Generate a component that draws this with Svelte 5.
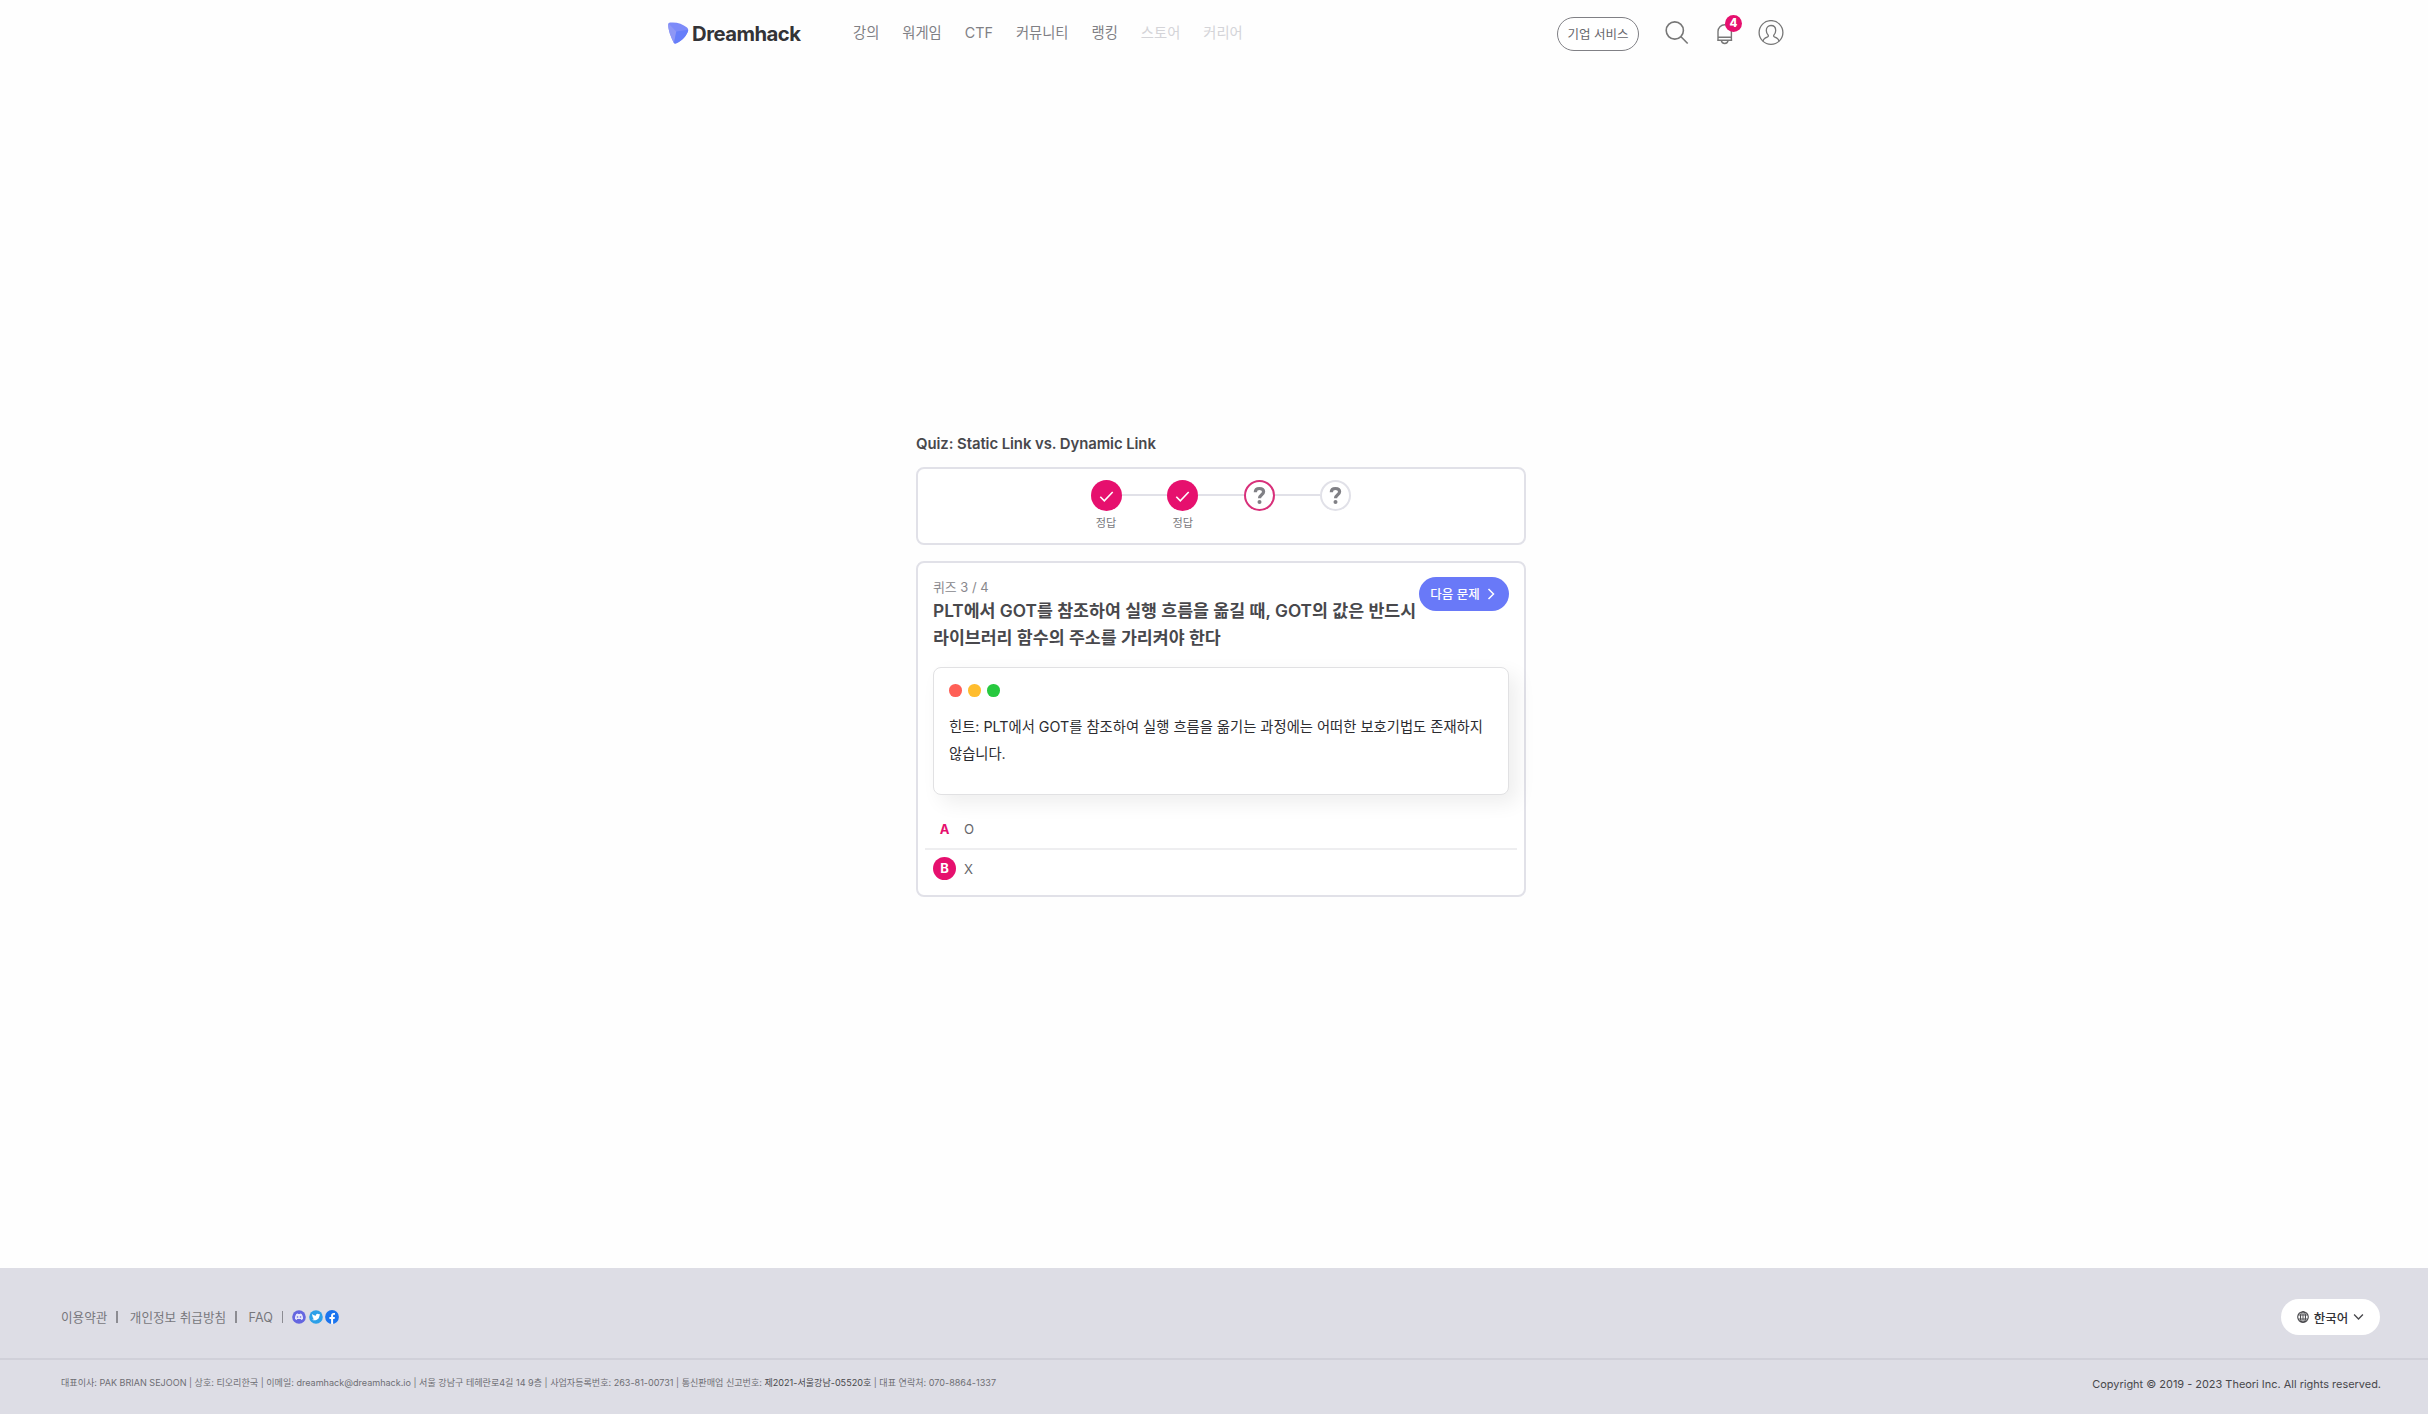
<script>
  const nav = [
    { label: '강의' },
    { label: '워게임' },
    { label: 'CTF' },
    { label: '커뮤니티' },
    { label: '랭킹' },
    { label: '스토어', muted: true },
    { label: '커리어', muted: true }
  ];
  const steps = [
    { state: 'done', label: '정답' },
    { state: 'done', label: '정답' },
    { state: 'current', label: '' },
    { state: 'todo', label: '' }
  ];
  const choices = [
    { key: 'A', text: 'O', selected: false },
    { key: 'B', text: 'X', selected: true }
  ];
</script>

<div class="page">
  <header>
    <a class="logo" href="#home">
      <svg width="21" height="22" viewBox="0 0 21 22">
        <path d="M2.200.5C8.500-.1 14.500 1.500 19 5.600c1.300 1.200 1.500 2.300.9 3.900-1.900 5-5.900 9.200-11.500 11.700-1.400.6-2.500.2-3-1.200C3 15 .2 8.500.2 2.500.3 1.200.9.6 2.200.5Z" fill="#7d8bf9" />
        <path d="M.4 1.500 8.300 9.500 6 20.900c-.3-.2-.5-.5-.6-.9C3 15 .2 8.500.2 2.500Z" fill="#8e97f5" />
        <path d="M8.300 9.500 20.100 7.800c0 .6 0 1.100-.2 1.700-1.900 5-5.900 9.200-11.500 11.700-1 .4-1.800.3-2.400-.3Z" fill="#667efa" />
      </svg>
      <span>Dreamhack</span>
    </a>
    <nav>
      {#each nav as item}
        <a href="#nav" class:muted={item.muted}>{item.label}</a>
      {/each}
    </nav>
    <div class="tools">
      <button class="biz">기업 서비스</button>
      <svg class="search" width="24" height="24" viewBox="0 0 24 24" fill="none" stroke="#777" stroke-width="1.600">
        <circle cx="9.800" cy="9.500" r="8.600" />
        <path d="m16 15.800 6.700 6.700" />
      </svg>
      <div class="bell">
        <svg width="18" height="24" viewBox="0 0 18 24" fill="none" stroke="#777" stroke-width="1.400">
          <path d="M2 18V9.500a6.700 6.700 0 0 1 13.400 0V18M1.200 18.200h15M2 15.200h13.400M5.300 18.400c.5 4.100 6.300 4.100 6.800 0" />
        </svg>
        <span class="badge">4</span>
      </div>
      <svg class="user" width="26" height="26" viewBox="0 0 26 26" fill="none" stroke="#777" stroke-width="1.300">
        <circle cx="13" cy="12.500" r="11.900" />
        <path d="M5 21.300c.3-2.500 2-3.400 4.200-4.200 1.400-.5 1.500-1.300.8-2.200-1-1.300-1.700-2.800-1.700-4.500 0-2.900 1.900-4.900 4.700-4.900s4.700 2 4.700 4.900c0 1.700-.7 3.200-1.700 4.500-.7.9-.6 1.700.8 2.200 2.200.8 3.900 1.700 4.200 4.200" />
      </svg>
    </div>
  </header>

  <main>
    <h1>Quiz: Static Link vs. Dynamic Link</h1>
    <section class="card progress">
      {#each steps as step, i}
        {#if i > 0}<span class="line"></span>{/if}
        <div class="step">
          <span class="dot {step.state}">
            {#if step.state === 'done'}
              <svg width="15" height="12" viewBox="0 0 15 12" fill="none" stroke="#fff" stroke-width="1.600">
                <path d="m1.300 6.800 4 4L13.700 2" />
              </svg>
            {:else}
              <svg width="13" height="19" viewBox="0 0 13 19" fill="none" stroke="#808085">
                <path d="M2.300 6.200C2.300 3.700 3.900 2.500 6.400 2.500S10.600 3.800 10.600 5.800C10.600 8.700 6.500 8.800 6.500 12.300" stroke-width="3.200" />
                <circle cx="6.500" cy="16" r="2" fill="#808085" stroke="none" />
              </svg>
            {/if}
          </span>
          <span class="label">{step.label}</span>
        </div>
      {/each}
    </section>

    <section class="card quiz">
      <div class="top">
        <div class="question">
          <p class="count">퀴즈 3 / 4</p>
          <h2>PLT에서 GOT를 참조하여 실행 흐름을 옮길 때, GOT의 값은 반드시<br />라이브러리 함수의 주소를 가리켜야 한다</h2>
        </div>
        <button class="next">
          다음 문제
          <svg width="8" height="12" viewBox="0 0 8 12" fill="none" stroke="#fff" stroke-width="1.500"><path d="m1.500 1 5 5-5 5" /></svg>
        </button>
      </div>
      <div class="hint">
        <div class="lights"><i class="red"></i><i class="yellow"></i><i class="green"></i></div>
        <p>힌트: PLT에서 GOT를 참조하여 실행 흐름을 옮기는 과정에는 어떠한 보호기법도 존재하지<br />않습니다.</p>
      </div>
      <div class="choices">
        {#each choices as c}
          <div class="choice">
            <span class="key" class:selected={c.selected}>{c.key}</span>
            <span>{c.text}</span>
          </div>
        {/each}
      </div>
    </section>
  </main>

  <footer>
    <div class="row links">
      <div class="left">
        <a href="#terms">이용약관</a><b></b>
        <a href="#privacy">개인정보 취급방침</a><b></b>
        <a class="faq" href="#faq">FAQ</a><b></b>
        <div class="social">
          <svg width="14" height="14" viewBox="0 0 14 14">
            <circle cx="7" cy="7" r="6.800" fill="#6566e0" />
            <path d="M4.300 3.900 5.900 3.500 6.200 4h1.600l.3-.5 1.600.4c1 1.500 1.500 3.100 1.300 5L9.300 9.900l-.6-.9H5.300l-.6.9L3 8.900c-.2-1.900.3-3.500 1.300-5Z" fill="#e8e8fb" />
            <circle cx="5.500" cy="7" r=".8" fill="#6566e0" /><circle cx="8.500" cy="7" r=".8" fill="#6566e0" />
          </svg>
          <svg width="14" height="14" viewBox="0 0 14 14">
            <circle cx="7" cy="7" r="6.800" fill="#2ca0e8" />
            <path d="M3.300 4c1 1.100 2.200 1.700 3.600 1.700C6.700 4 8.700 3 10 4.200l1-.3-.5 1 .7-.1-.8.9C10.400 9.300 6.500 11.400 3 9.700c1 0 1.700-.2 2.300-.7-.8-.1-1.200-.5-1.400-1.100h.6C3.700 7.600 3.300 7 3.300 6.200l.6.200C3.100 5.700 2.900 4.900 3.300 4Z" fill="#fff" />
          </svg>
          <svg width="14" height="14" viewBox="0 0 14 14">
            <circle cx="7" cy="7" r="6.900" fill="#1b74ee" />
            <path d="M6.100 13.900V9H4.400V7h1.700V5.600C6.100 3.900 7.100 3 8.600 3l1.400.1v1.600h-.9c-.8 0-1 .4-1 1V7h1.800L9.600 9H8.100v4.900Z" fill="#fff" />
          </svg>
        </div>
      </div>
      <button class="lang">
        <svg width="12" height="12" viewBox="0 0 12 12" fill="none" stroke="#48484c" stroke-width="1.100">
          <circle cx="6" cy="6" r="5.300" /><ellipse cx="6" cy="6" rx="2.500" ry="5.300" /><path d="M1.200 4h9.600M1.200 8h9.600M6 .7v10.600" stroke-width=".9" />
        </svg>
        <span>한국어</span>
        <svg width="11" height="8" viewBox="0 0 12 8" fill="none" stroke="#48484c" stroke-width="1.500"><path d="m1.200 1.300 4.800 4.800 4.800-4.800" /></svg>
      </button>
    </div>
    <div class="row legal">
      <p>대표이사: PAK BRIAN SEJOON | 상호: 티오리한국 | 이메일: dreamhack@dreamhack.io | 서울 강남구 테헤란로4길 14 9층 | 사업자등록번호: 263-81-00731 | 통신판매업 신고번호: <a href="#reg">제2021-서울강남-05520호</a> | 대표 연락처: 070-8864-1337</p>
      <p class="copy">Copyright © 2019 - 2023 Theori Inc. All rights reserved.</p>
    </div>
  </footer>
</div>

<style>
  .page {
    display: flex;
    flex-direction: column;
    height: 1414px;
    background: #fefefe;
    color: #48484c;
    font-family: Inter, 'Noto Sans CJK KR', sans-serif;
    font-size: 14.3px;
  }
  .page * { box-sizing: border-box; }
  h1, h2, p { margin: 0; }
  a { color: inherit; text-decoration: none; white-space: nowrap; }
  button { font-family: inherit; white-space: nowrap; padding: 0; border: 0; }
  svg { display: block; flex: none; }

  header {
    display: flex;
    align-items: center;
    width: 1116px;
    height: 66px;
    margin-left: 668px;
  }
  .logo { display: flex; align-items: center; gap: 3px; width: 185px; color: #333337; }
  .logo span { font-size: 20.300px; font-weight: 650; letter-spacing: -0.5px; line-height: 24px; padding-top: 2px; }
  nav { display: flex; align-items: baseline; gap: 23px; color: #808085; margin-top: -3px; }
  nav .muted { color: #d4d4d8; }
  .tools { display: flex; align-items: center; margin-left: auto; }
  .biz {
    width: 82px;
    height: 34px;
    margin-top: 2px;
    padding-bottom: 2px;
    border: 1px solid #808085;
    border-radius: 17px;
    background: #fff;
    color: #66666b;
    font-size: 12.500px;
  }
  .search { margin-left: 26px; }
  .bell { position: relative; margin-left: 27px; margin-top: 1px; }
  .badge {
    position: absolute;
    left: 9px;
    top: -7px;
    width: 17px;
    height: 17px;
    border-radius: 50%;
    background: #e6106e;
    color: #fff;
    font-size: 11.500px;
    font-weight: 800;
    line-height: 17px;
    text-align: center;
  }
  .user { margin-left: 24px; }

  main { width: 610px; margin: 368px 0 0 916px; flex: 1; }
  h1 { font-size: 14.900px; font-weight: 600; letter-spacing: -0.070px; line-height: 20px; margin-bottom: 13px; white-space: nowrap; }
  .card { border: 2px solid #e1e1e8; border-radius: 8px; background: #fff; }
  .progress { display: flex; justify-content: center; height: 78px; padding-top: 11px; }
  .step { display: flex; flex-direction: column; align-items: center; width: 31px; }
  .dot { display: flex; flex: none; align-items: center; justify-content: center; width: 31px; height: 31px; border-radius: 50%; }
  .done { background: #e6106e; }
  .current { border: 2px solid #d8307a; }
  .todo { border: 2px solid #e1e1e8; }
  .line { width: 45.600px; height: 2px; margin-top: 14px; background: #e1e1e8; }
  .label { margin-top: 3px; font-size: 11.200px; line-height: 18px; color: #77777c; white-space: nowrap; }

  .quiz { height: 336px; margin-top: 16px; padding: 14px 15px 0; }
  .top { display: flex; justify-content: space-between; height: 90px; }
  .question { width: 486px; padding-top: 1px; }
  .count { padding-top: 1px; font-size: 12.900px; line-height: 18px; color: #88888d; }
  h2 { font-size: 17.300px; font-weight: 600; line-height: 27px; white-space: nowrap; }
  .next {
    display: flex;
    flex: none;
    align-items: center;
    justify-content: center;
    gap: 7px;
    width: 90px;
    height: 34px;
    padding: 0 3px 1px 0;
    border-radius: 17px;
    background: #6979f8;
    color: #fff;
    font-size: 12.500px;
    font-weight: 500;
  }
  .hint {
    height: 128px;
    padding: 16px 15px 0;
    border: 1px solid #e1e1e3;
    border-radius: 8px;
    background: #fff;
    box-shadow: 8px 8px 20px rgba(0, 0, 0, 0.070);
    color: #2c2c30;
  }
  .lights { display: flex; gap: 6.500px; }
  .lights i { width: 12.600px; height: 12.600px; border-radius: 50%; }
  .red { background: #ff5f56; }
  .yellow { background: #ffbd2e; }
  .green { background: #27c93f; }
  .hint p { margin-top: 16px; line-height: 27px; white-space: nowrap; }
  .choices { margin: 15px -8px 0; }
  .choice { display: flex; align-items: center; gap: 8px; height: 38px; padding-left: 8px; font-size: 13.200px; color: #66666b; }
  .choice + .choice { height: 39px; border-top: 2px solid #eeeef0; }
  .key {
    width: 23px;
    height: 23px;
    border-radius: 50%;
    color: #e6106e;
    font-size: 13px;
    font-weight: 700;
    line-height: 23px;
    text-align: center;
  }
  .selected { background: #e6106e; color: #fff; }

  footer { height: 146px; background: #dddde5; }
  .row { display: flex; justify-content: space-between; padding: 0 48px 0 61px; }
  .links { height: 92px; padding-top: 8px; align-items: center; border-bottom: 2px solid #d0d0d9; }
  .left { display: flex; align-items: center; font-size: 12.600px; color: #77777c; }
  .left a { margin-top: -1px; }
  .left .faq { margin-top: 1px; }
  .left b { width: 1.500px; height: 12px; margin: 0 12px 0 9px; background: #8c8c92; }
  .left b:last-of-type { margin-right: 9px; }
  .social { display: flex; gap: 2.500px; }
  .lang {
    display: flex;
    align-items: center;
    justify-content: center;
    gap: 5px;
    width: 99px;
    height: 36px;
    border-radius: 18px;
    background: #fff;
    color: #333337;
    font-size: 12.500px;
    font-weight: 500;
  }
  .legal { padding-top: 13px; padding-right: 47px; font-size: 9.070px; line-height: 20px; color: #6e6e74; white-space: nowrap; }
  .legal a { color: #48484c; }
  .copy { padding-top: 1px; font-size: 10.950px; color: #48484c; }
</style>
